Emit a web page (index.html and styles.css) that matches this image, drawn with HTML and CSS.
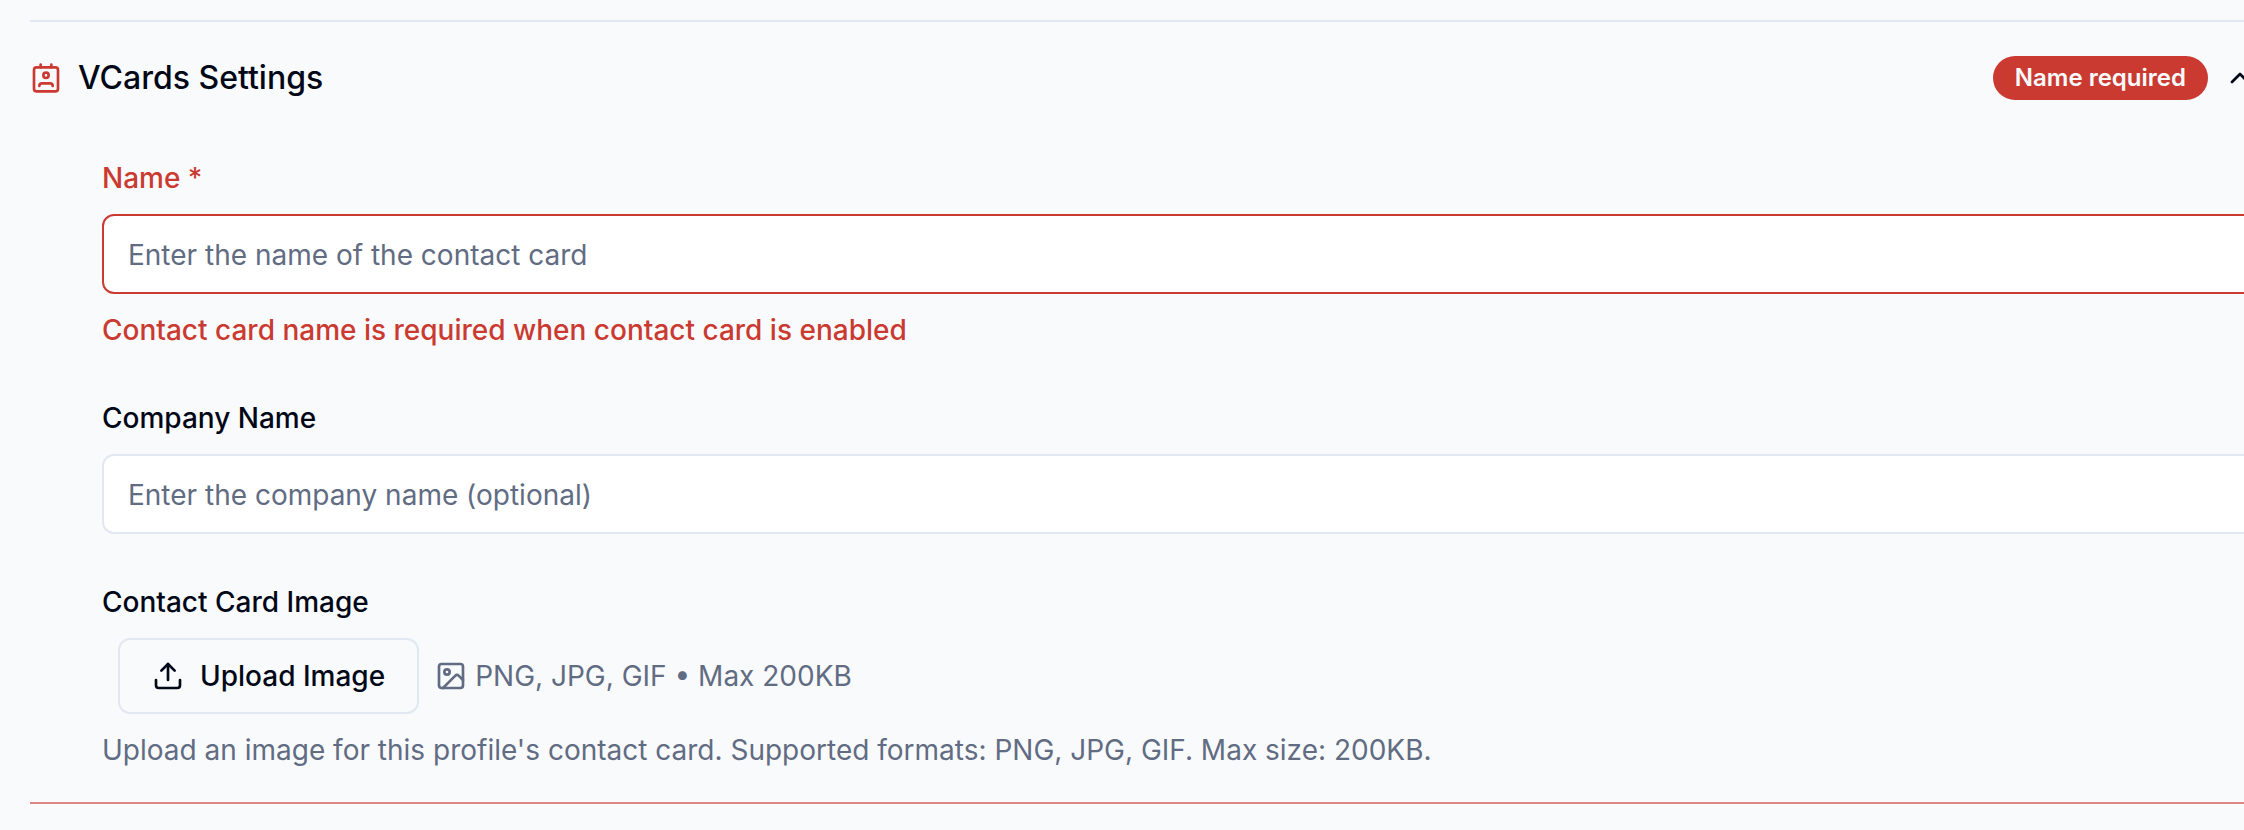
FILE: index.html
```html
<!DOCTYPE html>
<html lang="en">
<head>
  <meta charset="UTF-8">
  <meta name="viewport" content="width=device-width, initial-scale=1.0">
  <title>VCards Settings</title>
  <link rel="stylesheet" href="styles.css">
</head>
<body>
  <main class="page">
    <section class="accordion-item">
      <h2 class="accordion-header">
        <button type="button" class="accordion-trigger" aria-expanded="true" aria-controls="vcards-content">
          <svg class="icon icon-error" viewBox="0 0 24 24" aria-hidden="true">
            <path d="M17 18a2 2 0 0 0-2-2H9a2 2 0 0 0-2 2"/>
            <rect width="18" height="18" x="3" y="4" rx="2"/>
            <circle cx="12" cy="10" r="2"/>
            <path d="M8 2v2"/>
            <path d="M16 2v2"/>
          </svg>
          <span class="accordion-title">VCards Settings</span>
          <span class="badge">Name required</span>
          <svg class="icon" viewBox="0 0 24 24" aria-hidden="true">
            <path d="m18 15-6-6-6 6"/>
          </svg>
        </button>
      </h2>

      <form class="accordion-content" id="vcards-content">
        <div class="field">
          <label class="label label-error" for="card-name">Name *</label>
          <input class="input input-error" type="text" id="card-name" placeholder="Enter the name of the contact card" aria-invalid="true" aria-describedby="card-name-error">
          <p class="message" id="card-name-error">Contact card name is required when contact card is enabled</p>
        </div>

        <div class="field">
          <label class="label" for="company-name">Company Name</label>
          <input class="input" type="text" id="company-name" placeholder="Enter the company name (optional)">
        </div>

        <div class="field">
          <label class="label" for="card-image">Contact Card Image</label>
          <div class="upload">
            <button type="button" class="upload-button" id="card-image" aria-describedby="card-image-help">
              <svg class="icon" viewBox="0 0 24 24" aria-hidden="true">
                <path d="M21 15v4a2 2 0 0 1-2 2H5a2 2 0 0 1-2-2v-4"/>
                <path d="m17 8-5-5-5 5"/>
                <path d="M12 3v12"/>
              </svg>
              Upload Image
            </button>
            <div class="upload-info">
              <svg class="icon" viewBox="0 0 24 24" aria-hidden="true">
                <rect width="18" height="18" x="3" y="3" rx="2"/>
                <circle cx="9" cy="9" r="2"/>
                <path d="m21 15-3.086-3.086a2 2 0 0 0-2.828 0L6 21"/>
              </svg>
              <span>PNG, JPG, GIF • Max 200KB</span>
            </div>
          </div>
          <p class="help" id="card-image-help">Upload an image for this profile's contact card. Supported formats: PNG, JPG, GIF. Max size: 200KB.</p>
        </div>
      </form>
    </section>
  </main>
</body>
</html>
```

FILE: styles.css
```css
* {
  box-sizing: border-box;
}

body {
  margin: 0;
  background: #f9fafc;
  color: #020817;
  font-family: Inter, "Liberation Sans", sans-serif;
  font-size: 28px;
  line-height: 40px;
}

button,
input {
  font: inherit;
  color: inherit;
}

/* the panel is wider than the window, so its right edge is cut off */
.page {
  padding: 20px 0 0 30px;
  overflow: hidden;
}

.accordion-item {
  margin-right: -60px;
  border-top: 2px solid #e2e8f0;
  border-bottom: 2px solid #e08682;
}

.accordion-header {
  margin: 0;
}

.accordion-trigger {
  display: flex;
  align-items: center;
  gap: 16px;
  width: 100%;
  padding: 32px 48px 32px 0;
  border: none;
  background: none;
  text-align: left;
  cursor: pointer;
}

.accordion-title {
  flex: 1;
  font-size: 32px;
  font-weight: 500;
  line-height: 48px;
}

.badge {
  padding: 6px 22px;
  border-radius: 22px;
  background: #ca3a31;
  color: #f8fafc;
  font-size: 24px;
  font-weight: 600;
  line-height: 32px;
}

.icon {
  flex-shrink: 0;
  width: 32px;
  height: 32px;
  fill: none;
  stroke: currentColor;
  stroke-width: 2;
  stroke-linecap: round;
  stroke-linejoin: round;
}

.icon-error {
  color: #ca3a31;
}

.accordion-content {
  display: flex;
  flex-direction: column;
  gap: 48px;
  padding: 24px 0 32px 72px;
}

.field {
  display: flex;
  flex-direction: column;
  gap: 16px;
}

.label {
  font-weight: 500;
}

.label-error {
  color: #ca3a31;
}

.input {
  width: 100%;
  height: 80px;
  padding: 2px 24px 0;
  border: 2px solid #e2e8f0;
  border-radius: 12px;
  background: #fff;
}

.input::placeholder {
  color: #616c83;
}

.input-error {
  border-color: #ca3a31;
}

.message,
.help {
  margin: 0;
}

.message {
  color: #ca3a31;
  font-weight: 500;
}

.help,
.upload-info {
  color: #616c83;
}

.upload {
  display: flex;
  align-items: center;
  gap: 16px;
  padding-left: 16px;
}

.upload-button {
  display: flex;
  align-items: center;
  gap: 16px;
  height: 76px;
  padding: 0 32px;
  border: 2px solid #e2e8f0;
  border-radius: 12px;
  background: #f9fafc;
  font-weight: 500;
  cursor: pointer;
}

.upload-info {
  display: flex;
  align-items: center;
  gap: 8px;
}
```
